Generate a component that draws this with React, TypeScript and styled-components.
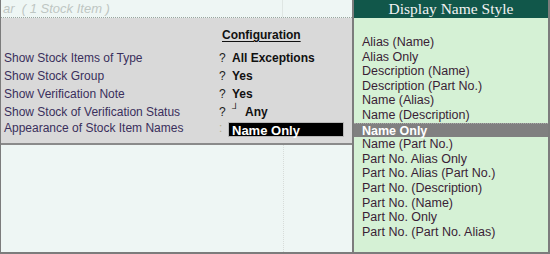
import styled, { createGlobalStyle } from "styled-components"

const GlobalStyle = createGlobalStyle`
    html, body {
        margin: 0;
        padding: 0;
        background: #ffffff;
    }
`

const configRows = [
    { label: "Show Stock Items of Type", sep: "?", value: "All Exceptions" },
    { label: "Show Stock Group", sep: "?", value: "Yes" },
    { label: "Show Verification Note", sep: "?", value: "Yes" },
    { label: "Show Stock of Verification Status", sep: "?", value: "Any", mark: true },
]

const nameStyles = [
    "Alias (Name)",
    "Alias Only",
    "Description (Name)",
    "Description (Part No.)",
    "Name (Alias)",
    "Name (Description)",
    "Name Only",
    "Name (Part No.)",
    "Part No. Alias Only",
    "Part No. Alias (Part No.)",
    "Part No. (Description)",
    "Part No. (Name)",
    "Part No. Only",
    "Part No. (Part No. Alias)",
]

export default function App() {
    const selected = "Name Only"

    return (
        <>
            <GlobalStyle />
            <Screen>
                <LeftSide>
                    <TopBar>
                        <TopTitle>ar&nbsp;&nbsp;( 1 Stock Item )</TopTitle>
                        <TopCell />
                    </TopBar>
                    <ConfigPanel>
                        <ConfigHeading>Configuration</ConfigHeading>
                        {configRows.map((row) => (
                            <ConfigRow key={row.label}>
                                <Label>{row.label}</Label>
                                <Sep>{row.sep}</Sep>
                                <Value>
                                    {row.mark && <Corner>┘</Corner>}
                                    {row.value}
                                </Value>
                            </ConfigRow>
                        ))}
                        <ConfigRow $tight>
                            <Label>Appearance of Stock Item Names</Label>
                            <Sep $faint>:</Sep>
                            <InputBox>Name Only</InputBox>
                        </ConfigRow>
                    </ConfigPanel>
                    <LowerArea>
                        <LowerCell />
                    </LowerArea>
                </LeftSide>
                <RightSide>
                    <ListHeader>Display Name Style</ListHeader>
                    <List>
                        {nameStyles.map((name) => (
                            <ListItem key={name} $active={name === selected}>
                                {name}
                            </ListItem>
                        ))}
                    </List>
                </RightSide>
            </Screen>
        </>
    )
}

const Screen = styled.div`
    width: 550px;
    height: 254px;
    box-sizing: border-box;
    display: flex;
    border-left: 1px solid #7c7c7c;
    border-right: 2px solid #7c7c7c;
    border-bottom: 2px solid #7c7c7c;
    font-family: "Liberation Sans", Arial, sans-serif;
    overflow: hidden;
`

const LeftSide = styled.div`
    width: 351px;
    display: flex;
    flex-direction: column;
    border-right: 2px solid #7c7c7c;
`

const TopBar = styled.div`
    height: 17px;
    display: flex;
    background: #eef6f4;
    border-bottom: 1px dotted #9aa69f;
`

const TopTitle = styled.div`
    width: 282px;
    padding-left: 2px;
    box-sizing: border-box;
    font-size: 13px;
    line-height: 17px;
    font-style: italic;
    color: #bec6c3;
    border-right: 1px solid #dfe6e3;
`

const TopCell = styled.div`
    flex: 1;
`

const ConfigPanel = styled.div`
    height: 127px;
    box-sizing: border-box;
    background: #d9d9d9;
    border-bottom: 2px solid #8a8a8a;
    padding: 9px 0 0 3px;
    display: flex;
    flex-direction: column;
`

const ConfigHeading = styled.div`
    margin-left: 218px;
    font-size: 12px;
    font-weight: bold;
    color: #111;
    text-decoration: underline;
    text-underline-offset: 2px;
    line-height: 16px;
    margin-bottom: 6px;
`

const ConfigRow = styled.div<{ $tight?: boolean }>`
    display: flex;
    align-items: center;
    height: 18px;
    margin-top: ${(p) => (p.$tight ? "-2px" : "0")};
    font-size: 12px;
`

const Label = styled.div`
    width: 215px;
    color: #3a2f5c;
`

const Sep = styled.div<{ $faint?: boolean }>`
    width: 9px;
    color: ${(p) => (p.$faint ? "#b5ad8c" : "#222")};
`

const Value = styled.div`
    font-weight: bold;
    color: #111;
    display: flex;
    align-items: center;
    gap: 6px;
    margin-left: 4px;
`

const Corner = styled.span`
    font-weight: normal;
    font-size: 10px;
    line-height: 10px;
    position: relative;
    top: -3px;
`

const InputBox = styled.div`
    width: 116px;
    height: 15px;
    box-sizing: border-box;
    background: #000;
    color: #fff;
    font-weight: bold;
    font-size: 13px;
    line-height: 15px;
    padding-left: 3px;
    border: 1px solid #b8b8b8;
    margin-top: 2px;
`

const LowerArea = styled.div`
    flex: 1;
    display: flex;
    background: #eef6f4;
`

const LowerCell = styled.div`
    width: 282px;
    border-right: 1px dotted #d7dcd9;
`

const RightSide = styled.div`
    flex: 1;
    display: flex;
    flex-direction: column;
    background: #d5f1d5;
`

const ListHeader = styled.div`
    height: 18px;
    background: #11574a;
    color: #f2f2f2;
    font-family: "Liberation Serif", "Times New Roman", serif;
    font-size: 15.5px;
    line-height: 18px;
    text-align: center;
`

const List = styled.div`
    padding-top: 17px;
    display: flex;
    flex-direction: column;
`

const ListItem = styled.div<{ $active?: boolean }>`
    height: 14.6px;
    line-height: 14.6px;
    padding-left: 8px;
    font-size: 12.5px;
    color: ${(p) => (p.$active ? "#ffffff" : "#3a1e35")};
    font-weight: ${(p) => (p.$active ? "bold" : "normal")};
    background: ${(p) => (p.$active ? "#808080" : "transparent")};
    border-top: ${(p) => (p.$active ? "1px dotted #a8a8a8" : "none")};
    box-sizing: border-box;
`
